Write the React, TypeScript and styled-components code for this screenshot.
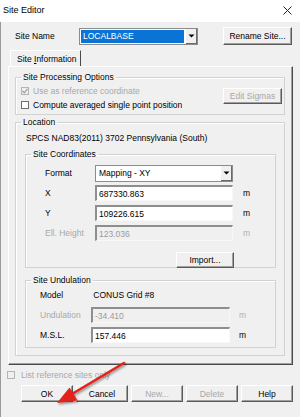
import React from 'react';
import styled, { createGlobalStyle } from 'styled-components';

const Global = createGlobalStyle`
  html, body { margin: 0; padding: 0; background: #ffffff; }
  body { font-family: "Liberation Sans", Arial, sans-serif; }
  * { box-sizing: border-box; }
`;

const Window = styled.div`
  position: relative;
  width: 300px;
  height: 417px;
  background: #f0f0f0;
  box-shadow: inset 1px 0 0 #9a9a9a;
  overflow: hidden;
  font-size: 8.5px;
  color: #000;
  display: flex;
  flex-direction: column;
`;

const TitleBar = styled.div`
  height: 22px;
  flex: none;
  background: #ffffff;
  display: flex;
  align-items: center;
  justify-content: space-between;
  padding: 0 8px 2px 3px;
`;

const Title = styled.span`
  font-size: 9px;
`;

const SiteNameRow = styled.div`
  margin-top: 5px;
  height: 18px;
  display: flex;
  align-items: center;
  padding-left: 15px;
`;

const FieldLabel = styled.span<{ $w: number; $disabled?: boolean }>`
  width: ${(p) => p.$w}px;
  flex: none;
  color: ${(p) => (p.$disabled ? '#a8a8a8' : '#000')};
  white-space: nowrap;
`;

const Combo = styled.div<{ $w: number }>`
  width: ${(p) => p.$w}px;
  height: 17px;
  display: flex;
  border: 1px solid #8c8c8c;
  background: #fff;
`;

const ComboValue = styled.div<{ $selected?: boolean }>`
  flex: 1;
  margin: 1px;
  padding-left: 2px;
  display: flex;
  align-items: center;
  background: ${(p) => (p.$selected ? '#0a74d6' : '#fff')};
  color: ${(p) => (p.$selected ? '#fff' : '#000')};
  white-space: nowrap;
`;

const ComboButton = styled.div`
  width: 12px;
  flex: none;
  display: flex;
  align-items: center;
  justify-content: center;
  background: #f0f0f0;
  border-left: 1px solid #fff;
  box-shadow: inset -1px -1px 0 #6a6a6a;
`;

const Button = styled.div<{ $w: number; $h?: number; $disabled?: boolean }>`
  width: ${(p) => p.$w}px;
  height: ${(p) => p.$h ?? 17}px;
  flex: none;
  display: flex;
  align-items: center;
  justify-content: center;
  background: #f0f0f0;
  border-top: 1px solid #ffffff;
  border-left: 1px solid #ffffff;
  border-right: 1px solid #5a5a5a;
  border-bottom: 1px solid #5a5a5a;
  box-shadow: inset -1px -1px 0 #a0a0a0;
  color: ${(p) => (p.$disabled ? '#a8a8a8' : '#000')};
  white-space: nowrap;
`;

const RenameButton = styled(Button)`
  margin-left: 25px;
`;

const TabStrip = styled.div`
  margin-top: 5px;
  height: 16px;
  padding-left: 10px;
  display: flex;
`;

const Tab = styled.div`
  width: 71px;
  height: 16px;
  padding-left: 6px;
  display: flex;
  align-items: center;
  border-top: 1px solid #ffffff;
  border-left: 1px solid #ffffff;
  border-right: 1px solid #4a4a4a;
`;

const Panel = styled.div`
  margin: 0 7px 0 8px;
  border-top: 1px solid #ffffff;
  border-left: 1px solid #ffffff;
  border-right: 1px solid #4a4a4a;
  border-bottom: 1px solid #4a4a4a;
  box-shadow: inset -1px -1px 0 #a0a0a0;
  padding: 4px 7px 8px 6px;
  display: flex;
  flex-direction: column;
`;

const Group = styled.fieldset<{ $mt?: number; $mx?: string }>`
  margin: ${(p) => p.$mt ?? 0}px ${(p) => p.$mx ?? '0 0 0'};
  padding: 0;
  min-width: 0;
  border: 1px solid #d2d2d2;
  box-shadow: inset 1px 1px 0 #ffffff;
`;

const Legend = styled.legend`
  margin-left: 5px;
  padding: 0 2px;
  line-height: 12px;
  font-size: 8.5px;
`;

const ProcBody = styled.div`
  display: flex;
  justify-content: space-between;
  padding: 2px 2px 3px 5px;
`;

const CheckList = styled.div`
  display: flex;
  flex-direction: column;
  gap: 2px;
`;

const CheckRow = styled.div<{ $disabled?: boolean; $gap?: number }>`
  height: 12px;
  display: flex;
  align-items: center;
  color: ${(p) => (p.$disabled ? '#a8a8a8' : '#000')};
  white-space: nowrap;
  gap: ${(p) => p.$gap ?? 4}px;
`;

const Box = styled.span<{ $disabled?: boolean }>`
  width: 8px;
  height: 8px;
  flex: none;
  display: flex;
  align-items: center;
  justify-content: center;
  border: 1px solid ${(p) => (p.$disabled ? '#b4b4b4' : '#6e6e6e')};
  background: ${(p) => (p.$disabled ? '#f0f0f0' : '#ffffff')};
`;

const SigmaButton = styled(Button)`
  margin-top: 3px;
`;

const LocText = styled.div`
  margin-top: 4px;
  padding-left: 10px;
  line-height: 12px;
  white-space: nowrap;
`;

const FieldGrid = styled.div<{ $cols: string; $pl: number; $pt: number; $pb: number }>`
  display: grid;
  grid-template-columns: ${(p) => p.$cols};
  grid-auto-rows: 16px;
  row-gap: 4px;
  align-items: center;
  padding: ${(p) => p.$pt}px 0 ${(p) => p.$pb}px ${(p) => p.$pl}px;
`;

const Input = styled.div<{ $disabled?: boolean }>`
  height: 16px;
  display: flex;
  align-items: center;
  padding: 1px 0 0 2px;
  border-top: 2px solid #8e8e8e;
  border-left: 2px solid #8e8e8e;
  border-right: 1px solid #f8f8f8;
  border-bottom: 1px solid #f8f8f8;
  background: ${(p) => (p.$disabled ? '#f0f0f0' : '#ffffff')};
  color: ${(p) => (p.$disabled ? '#9a9a9a' : '#000')};
  white-space: nowrap;
`;

const Unit = styled.span<{ $disabled?: boolean; $ml: number }>`
  margin-left: ${(p) => p.$ml}px;
  color: ${(p) => (p.$disabled ? '#b0b0b0' : '#000')};
`;

const ImportButton = styled(Button)`
  grid-column: 2;
  justify-self: end;
  margin-top: 14px;
  margin-right: -1px;
`;

const FooterCheck = styled.div`
  margin-top: 4px;
  padding-left: 7px;
`;

const ButtonRow = styled.div`
  margin-top: 4px;
  padding-left: 21px;
  display: flex;
  gap: 3px;
`;

const Overlay = styled.svg`
  position: absolute;
  left: 0;
  top: 0;
  pointer-events: none;
`;

const Accel = styled.span`
  text-decoration: underline;
`;

const Arrow = () => (
  <svg width="7" height="4" viewBox="0 0 7 4">
    <path d="M0.5 0.5h6L3.5 3.5z" fill="#000" />
  </svg>
);

export default function App() {
  return (
    <>
      <Global />
      <Window>
        <TitleBar>
          <Title>Site Editor</Title>
          <svg width="9" height="9" viewBox="0 0 9 9">
            <path d="M0.5 0.5L8.5 8.5M8.5 0.5L0.5 8.5" stroke="#222" strokeWidth="1" />
          </svg>
        </TitleBar>

        <SiteNameRow>
          <FieldLabel $w={64}>Site Name</FieldLabel>
          <Combo $w={119}>
            <ComboValue $selected>LOCALBASE</ComboValue>
            <ComboButton>
              <Arrow />
            </ComboButton>
          </Combo>
          <RenameButton $w={69} $h={18}>Rename Site...</RenameButton>
        </SiteNameRow>

        <TabStrip>
          <Tab>
            Site&nbsp;<Accel>I</Accel>nformation
          </Tab>
        </TabStrip>

        <Panel>
          <Group>
            <Legend>Site Processing Options</Legend>
            <ProcBody>
              <CheckList>
                <CheckRow $disabled>
                  <Box $disabled>
                    <svg width="6" height="6" viewBox="0 0 6 6">
                      <path d="M0.5 3L2.3 4.8L5.5 0.8" stroke="#a0a0a0" strokeWidth="1.3" fill="none" />
                    </svg>
                  </Box>
                  Use as reference coordinate
                </CheckRow>
                <CheckRow>
                  <Box />
                  Compute averaged single point position
                </CheckRow>
              </CheckList>
              <SigmaButton $w={59} $h={16} $disabled>
                Edit Sigmas
              </SigmaButton>
            </ProcBody>
          </Group>

          <Group $mt={1} $mx="0 0 0">
            <Legend>Location</Legend>
            <LocText>SPCS NAD83(2011) 3702 Pennsylvania (South)</LocText>

            <Group $mt={4} $mx="8px 0 9px">
              <Legend>Site Coordinates</Legend>
              <FieldGrid $cols="50px 138px auto" $pl={19} $pt={5} $pb={6}>
                <FieldLabel $w={50}>Format</FieldLabel>
                <Combo $w={138}>
                  <ComboValue>Mapping - XY</ComboValue>
                  <ComboButton>
                    <Arrow />
                  </ComboButton>
                </Combo>
                <span />
                <FieldLabel $w={50}>X</FieldLabel>
                <Input>687330.863</Input>
                <Unit $ml={10}>m</Unit>
                <FieldLabel $w={50}>Y</FieldLabel>
                <Input>109226.615</Input>
                <Unit $ml={10}>m</Unit>
                <FieldLabel $w={50} $disabled>
                  Ell. Height
                </FieldLabel>
                <Input $disabled>123.036</Input>
                <Unit $ml={10} $disabled>
                  m
                </Unit>
                <ImportButton $w={58} $h={16}>
                  Import...
                </ImportButton>
              </FieldGrid>
            </Group>

            <Group $mt={6} $mx="8px 7px 9px">
              <Legend>Site Undulation</Legend>
              <FieldGrid $cols="51px 139px auto" $pl={14} $pt={1} $pb={4}>
                <FieldLabel $w={51}>Model</FieldLabel>
                <FieldLabel $w={139}>&nbsp;CONUS Grid #8</FieldLabel>
                <span />
                <FieldLabel $w={51} $disabled>
                  Undulation
                </FieldLabel>
                <Input $disabled>-34.410</Input>
                <Unit $ml={9} $disabled>
                  m
                </Unit>
                <FieldLabel $w={51}>M.S.L.</FieldLabel>
                <Input>157.446</Input>
                <Unit $ml={9}>m</Unit>
              </FieldGrid>
            </Group>
          </Group>
        </Panel>

        <FooterCheck>
          <CheckRow $disabled $gap={6}>
            <Box $disabled />
            List reference sites only
          </CheckRow>
        </FooterCheck>

        <ButtonRow>
          <Button $w={52}>OK</Button>
          <Button $w={52}>Cancel</Button>
          <Button $w={52} $disabled>
            New...
          </Button>
          <Button $w={52} $disabled>
            Delete
          </Button>
          <Button $w={52}>Help</Button>
        </ButtonRow>

        <Overlay width="300" height="417" viewBox="0 0 300 417">
          <defs>
            <filter id="sh" x="-20%" y="-20%" width="140%" height="140%">
              <feDropShadow dx="1" dy="1.5" stdDeviation="1" floodColor="#000" floodOpacity="0.45" />
            </filter>
          </defs>
          <g filter="url(#sh)">
            <path d="M124 363L72 394" stroke="#e3211b" strokeWidth="2.6" strokeLinecap="round" />
            <path d="M57 403L69.5 387.5L77.5 400.5Z" fill="#e3211b" />
          </g>
        </Overlay>
      </Window>
    </>
  );
}
